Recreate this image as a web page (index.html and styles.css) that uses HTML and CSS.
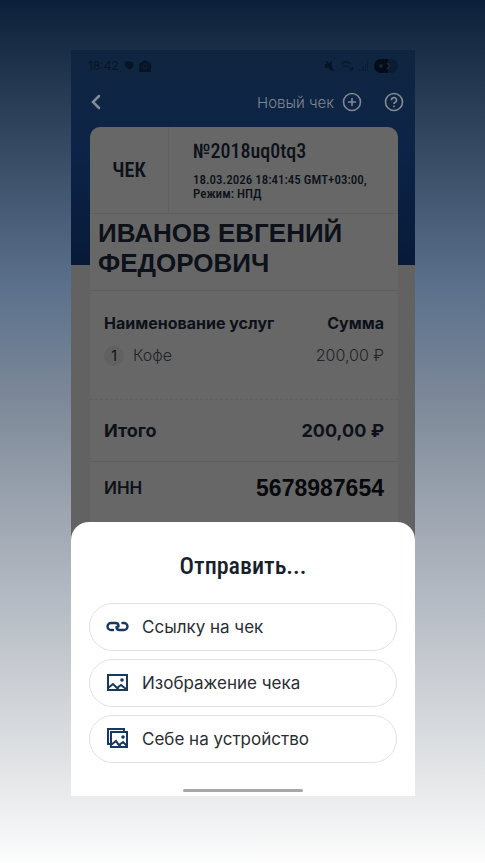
FILE: index.html
```html
<!DOCTYPE html>
<html lang="ru">
<head>
<meta charset="utf-8">
<meta name="viewport" content="width=device-width, initial-scale=1">
<title>Чек</title>
<link rel="stylesheet" href="styles.css">
</head>
<body>
<main class="phone">
  <div class="status">
    <time>18:42</time>
    <svg width="10" height="10" viewBox="0 0 10 10" fill="currentColor"><path d="M1 1q4-1.500 8 .5q1.500 3-1 5.500l-3 2-1-2q-4-1-3-6z"/></svg>
    <svg width="12" height="12" viewBox="0 0 12 12"><path fill="currentColor" d="M0 4 6 0l6 4v8H0z"/><path d="m2 6 4 3 4-3M4 4h4" fill="none" stroke="#10253e"/></svg>
    <span class="spacer"></span>
    <svg width="10" height="12" viewBox="0 0 10 12"><path fill="currentColor" d="M0 4h3l4-3v10L3 8H0z"/><path d="m1 1 8 10" stroke="currentColor" stroke-width="1.500"/></svg>
    <svg class="faint" width="14" height="12" viewBox="0 0 14 12" fill="none" stroke="currentColor" stroke-width="2"><path d="M1 4q5-4 10 0M3 7q3-2 6 0M9 8l4 2M10 11l3-4"/></svg>
    <svg class="faint" width="10" height="12" viewBox="0 0 10 12" fill="currentColor"><path d="M0 9h2v2H0zM3 7h2v4H3zM6 4h1v7H6zM8 1h1v10H8z"/></svg>
    <svg width="24" height="14" viewBox="0 0 24 14"><rect width="24" height="14" rx="7" fill="#0a1b33"/><path d="M7 0h7v14H7A7 7 0 0 1 7 0z" fill="#040c18"/><path d="M5 7h4M7 5v4M13 4l3 3-3 3" fill="none" stroke="#15283e" stroke-width="1.500"/></svg>
  </div>
  <header class="bar">
    <button class="icon-btn" aria-label="Назад"><svg width="12" height="18" viewBox="0 0 12 18" fill="none" stroke="currentColor" stroke-width="2.500" stroke-linecap="round"><path d="M9 3 3 9l6 6"/></svg></button>
    <button class="new">Новый чек
      <svg width="20" height="20" viewBox="0 0 20 20" fill="none" stroke="currentColor" stroke-width="1.600"><circle cx="10" cy="10" r="8.500"/><path d="M10 6v8M6 10h8"/></svg>
    </button>
    <button class="icon-btn" aria-label="Помощь"><svg width="20" height="20" viewBox="0 0 20 20" fill="none" stroke="currentColor" stroke-width="1.600"><circle cx="10" cy="10" r="8.500"/><path d="M7.500 8.200a2.500 2.500 0 1 1 3.700 2.100Q10 11 10 12M10 13.500v1.700"/></svg></button>
  </header>
  <article class="receipt">
    <div class="head">
      <h1 class="label">ЧЕК</h1>
      <div class="meta">
        <h2 class="number">№2018uq0tq3</h2>
        <p class="date">18.03.2026 18:41:45 GMT+03:00, Режим: НПД</p>
      </div>
    </div>
    <h2 class="name">ИВАНОВ ЕВГЕНИЙ ФЕДОРОВИЧ</h2>
    <table class="services">
      <thead><tr><th>Наименование услуг</th><th>Сумма</th></tr></thead>
      <tbody><tr><td><span class="index">1</span>Кофе</td><td>200,00 ₽</td></tr></tbody>
    </table>
    <div class="row total"><span>Итого</span><span>200,00 ₽</span></div>
    <div class="row inn"><span>ИНН</span><span class="inn-value">5678987654</span></div>
  </article>
  <section class="sheet">
    <h2 class="title">Отправить...</h2>
    <button class="option">
      <svg width="24" height="24" viewBox="0 0 24 24" fill="none" stroke="currentColor" stroke-width="2.400" stroke-linecap="round" stroke-linejoin="round"><path d="M7 15H5a3.500 3.500 0 0 1 0-7h4.500q3 0 3 3v.5M16.500 8H18a3.500 3.500 0 0 1 0 7h-4.500q-3 0-3-3"/></svg>
      Ссылку на чек
    </button>
    <button class="option">
      <svg width="24" height="24" viewBox="0 0 24 24" fill="none" stroke="currentColor" stroke-width="2"><path d="M2 4h19v15H2zM2 17l5-4 4 4 4-3 5 4M9 15l4 4"/><circle cx="16" cy="9" r="1.800" fill="currentColor" stroke="none"/></svg>
      Изображение чека
    </button>
    <button class="option">
      <svg width="24" height="24" viewBox="0 0 24 24" fill="none" stroke="currentColor" stroke-width="2"><path d="M5 17H2V2h16v3M5 5h16v15H5zM5 18l5-4 3 4 4-3 4 4M11 16l4 4"/><circle cx="17" cy="10" r="1.800" fill="currentColor" stroke="none"/></svg>
      Себе на устройство
    </button>
    <div class="handle"></div>
  </section>
</main>
</body>
</html>
```
FILE: styles.css
```css
* { box-sizing: border-box; margin: 0; }
body {
  min-height: 100vh;
  padding: 50px 70px 66px 71px;
  font-family: Inter, "Liberation Sans", sans-serif;
  background: linear-gradient(#0c203b 0%, #1e314a 7%, #5b708b 33%, #7c8898 46%, #a8afb9 64%, #e4e6e8 90%, #fdfdfd 100%);
}
button { border: 0; padding: 0; background: none; color: inherit; font: inherit; cursor: pointer; }
svg { display: block; flex: none; }
.phone {
  background: linear-gradient(#0f253f, #0d2448 45%, #071a38) 0 0 / 100% 215px no-repeat #626262;
}
.status { display: flex; align-items: center; gap: 5px; height: 31px; padding: 0 17px; color: #071425; font-size: 12px; }
.spacer { flex: 1; }
.faint { opacity: .5; }
.bar { display: flex; align-items: center; height: 42px; padding: 0 11px 0 19px; color: #858b92; }
.new { display: flex; align-items: center; gap: 8px; margin: 0 22px 0 auto; font-size: 15px; font-weight: 300; color: #7f8791; }
.receipt { margin: 4px 17px 0 19px; padding-bottom: 8px; border-radius: 10px 10px 0 0; background: #676767; color: #0d1119; }
.head { display: flex; height: 87px; border-bottom: 1px solid #5e5e5e; }
.label, .number, .date, .title { font-family: "Liberation Sans Narrow", "Roboto Condensed", Roboto, sans-serif; }
.label { width: 79px; line-height: 86px; text-align: center; font-size: 20px; font-weight: 600; border-right: 1px solid #606060; }
.meta { flex: 1; padding: 11px 16px 0 24px; }
.number { font-size: 20px; line-height: 26px; font-weight: 500; }
.date { margin-top: 9px; font-size: 13px; line-height: 14px; font-weight: 500; }
.name { padding: 4px 8px 12px; font: 700 26px/30px "Liberation Sans", Arial, sans-serif; border-bottom: 1px solid #5e5e5e; }
.services { width: 100%; height: 109px; border-spacing: 0; border-bottom: 1px dashed #5f5f5f; }
.services th, .services td { padding: 0 14px; text-align: left; font-size: 16px; line-height: 24px; }
.services th { padding-top: 20px; }
.services td { padding: 8px 14px 32px; font-weight: 300; color: #20242a; }
.services th:last-child, .services td:last-child { text-align: right; }
.index { display: inline-block; width: 20px; margin-right: 9px; border-radius: 10px; background: #616161; color: #0d1119; text-align: center; font-size: 14px; line-height: 20px; font-weight: 400; }
.row { display: flex; align-items: center; justify-content: space-between; padding: 0 14px; }
.total { height: 62px; border-bottom: 1px solid #5e5e5e; font-size: 18px; font-weight: 700; }
.inn { height: 52px; font-size: 17px; font-weight: 600; }
.inn-value { font: 700 23px/26px "Liberation Sans", Arial, sans-serif; color: #08090c; }
.sheet { display: flex; flex-direction: column; gap: 8px; padding: 27px 18px 4px; border-radius: 18px 18px 0 0; background: #fff; }
.title { margin-bottom: 12px; text-align: center; font-size: 24px; line-height: 34px; font-weight: 500; color: #16212d; }
.option { display: flex; align-items: center; gap: 12px; height: 48px; padding: 0 16px; border: 1px solid #e2e2e4; border-radius: 24px; color: #2a2e33; font-size: 17px; }
.option svg { color: #173861; }
.handle { align-self: center; width: 120px; height: 3px; margin-top: 18px; border-radius: 2px; background: #a6a6a6; }
```
